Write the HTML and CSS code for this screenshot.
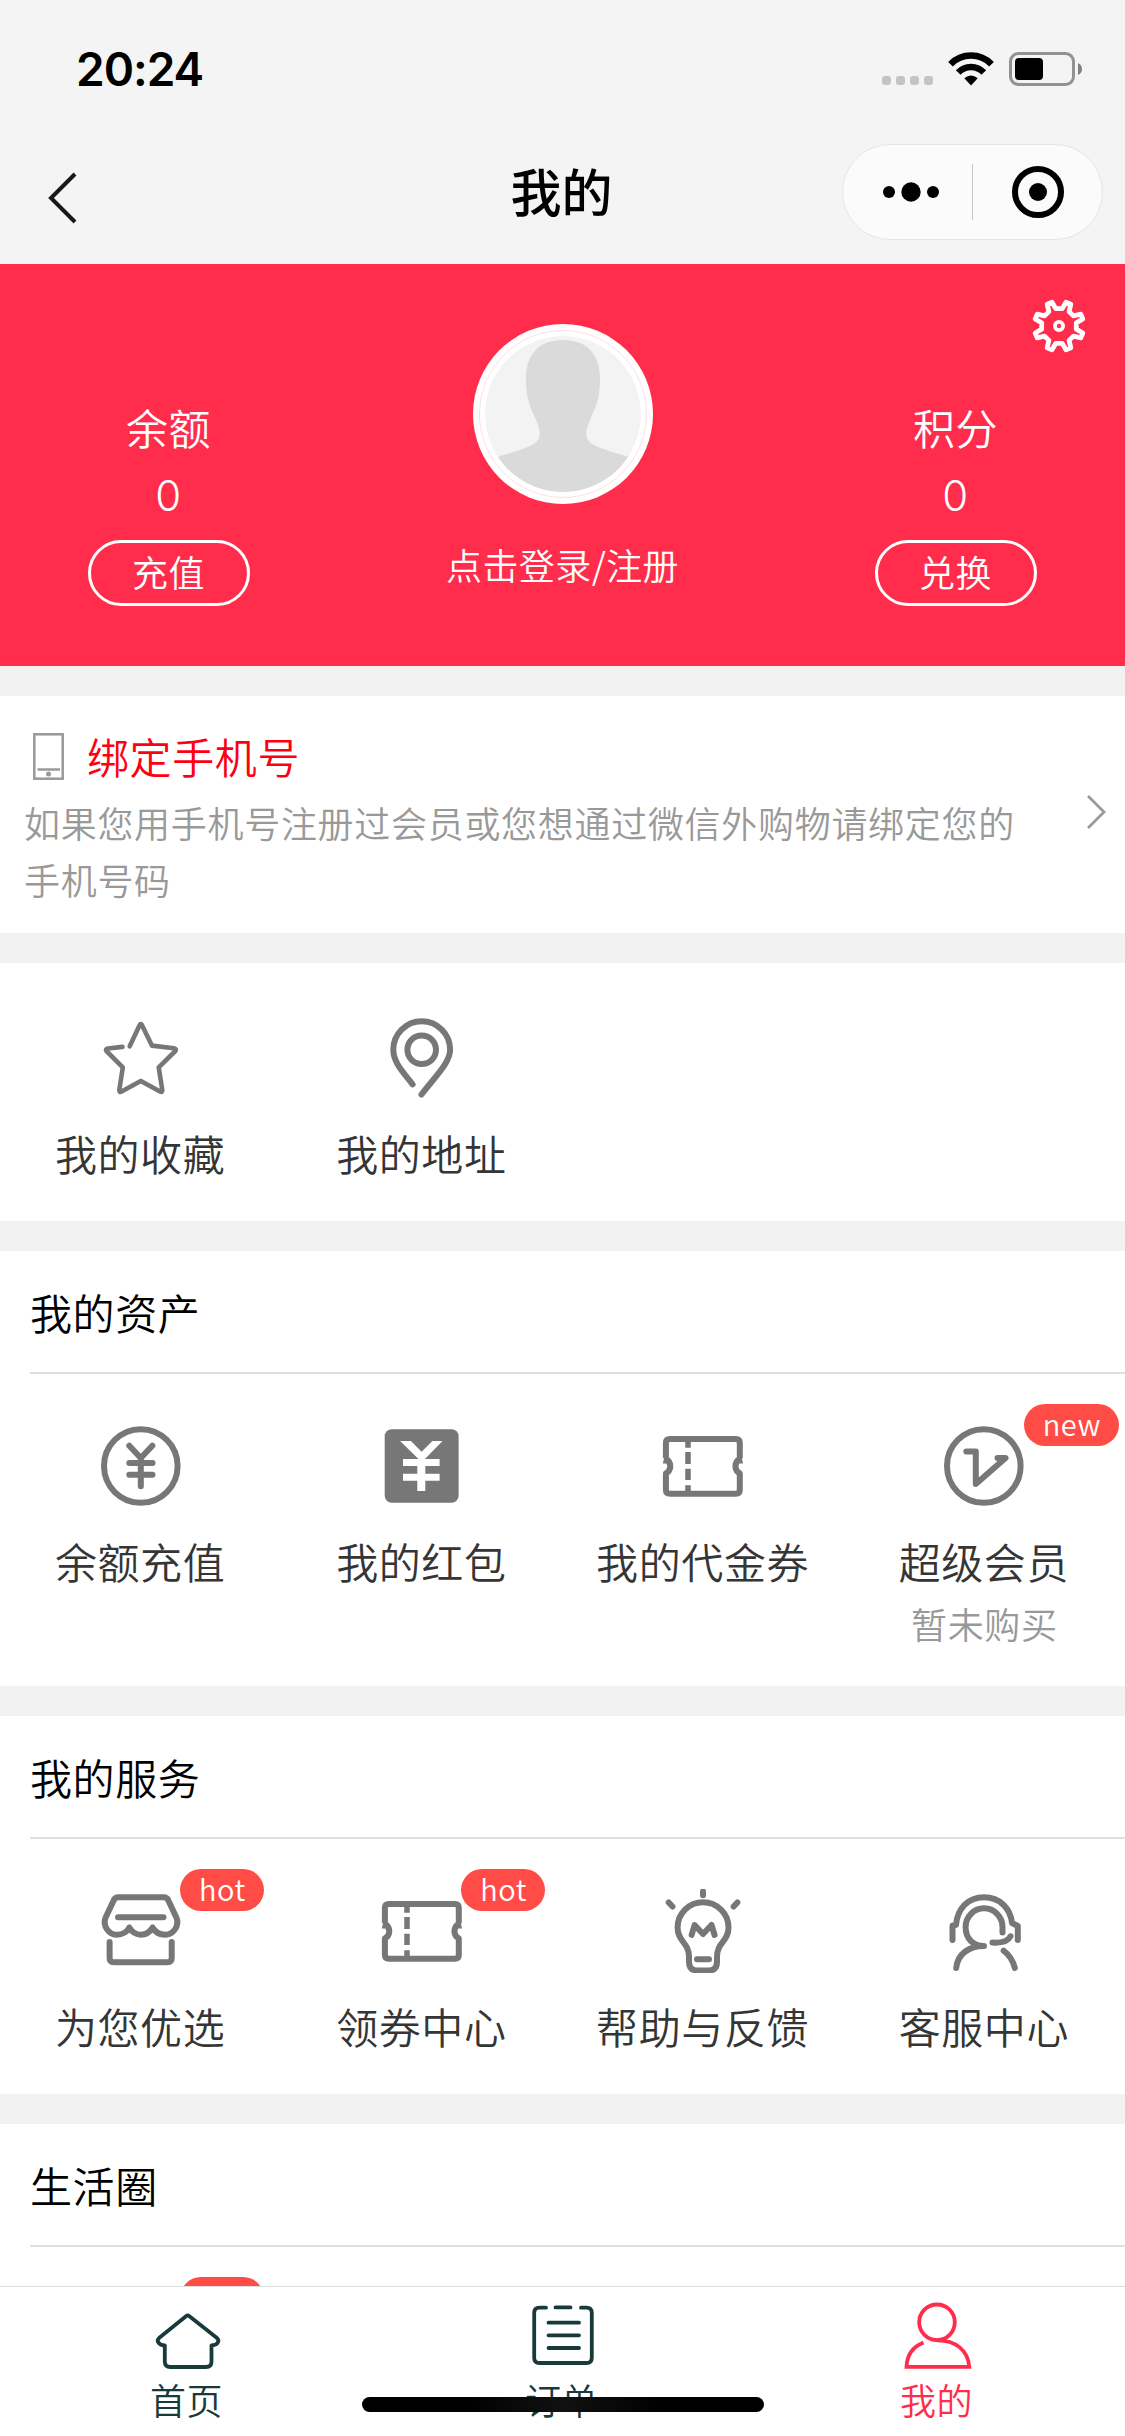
FILE: index.html
```html
<!DOCTYPE html>
<html lang="zh-CN">
<head>
<meta charset="utf-8">
<title>我的</title>
<link rel="stylesheet" href="styles.css">
</head>
<body>
<svg class="defs" width="0" height="0">
  <symbol id="ticket" viewBox="0 0 84 84">
    <path stroke-linecap="butt" d="M2.5 36.5Q4.9 37 4.9 35V19q0-4 4-4H74.8q4 0 4 4V35Q78.8 37 81.4 36.5M4.9 35A8.2 8.2 0 0 1 4.9 49.5V65.700q0 4 4 4H74.800q4 0 4-4V49.500A8.200 8.200 0 0 1 78.800 35"/>
    <path stroke-linecap="butt" stroke-width="5.500" d="M27 18V23.700M27 28V40M27 44.700V56M27 61.300V67"/>
  </symbol>
</svg>
<div class="page">
  <header>
    <div class="status">
      <span class="time">20:24</span>
      <div class="signs">
        <div class="signal"><i></i><i></i><i></i><i></i></div>
        <svg class="wifi" width="46" height="34" viewBox="0 0 46 34"><g fill="none" stroke="#000" stroke-width="6.500"><path d="M2.500 12.200A28.700 28.700 0 0 1 43.500 12.200"/><path d="M10.200 20.500A17.500 17.500 0 0 1 35.800 20.500"/></g><path d="M23 33.500L16.300 26.300Q23 20.500 29.700 26.300Z"/></svg>
        <svg width="74" height="34" viewBox="0 0 74 34"><rect x="1.500" y="1.500" width="63" height="31" rx="8" fill="none" stroke="#929292" stroke-width="3"/><rect x="6" y="6" width="28" height="22" rx="4"/><path d="M69 11Q73 13 73 17T69 23Z" fill="#808080"/></svg>
      </div>
    </div>
    <div class="nav">
      <svg class="back" width="32" height="56" viewBox="0 0 32 56"><path d="M28 4L4 28L28 52" fill="none" stroke="#191919" stroke-width="4"/></svg>
      <h1>我的</h1>
      <div class="capsule">
        <svg width="50" height="20" viewBox="0 0 50 20"><circle cx="6" cy="10" r="6"/><circle cx="28" cy="10" r="9.700"/><circle cx="50" cy="10" r="6"/></svg>
        <span class="bar"></span>
        <svg width="52" height="52" viewBox="0 0 52 52"><circle cx="26" cy="26" r="23" fill="none" stroke="#000" stroke-width="6"/><circle cx="26" cy="26" r="9"/></svg>
      </div>
    </div>
  </header>

  <main>
    <section class="hero">
      <div class="side"><span>余额</span><span class="num">0</span><a class="pill">充值</a></div>
      <div class="user">
        <svg width="180" height="180" viewBox="0 0 180 180">
          <defs><clipPath id="face"><circle cx="90" cy="90" r="78"/></clipPath></defs>
          <circle cx="90" cy="90" r="90" fill="#fff"/>
          <circle cx="90" cy="90" r="83.500" fill="none" stroke="#ffdfe4" stroke-width="1"/>
          <g clip-path="url(#face)"><circle cx="90" cy="90" r="78" fill="#f3f3f3"/>
          <path fill="#dadada" d="M90 16C66 16 53 30 53 55C53 76 58 84 63 96C67 105 68 111 65 116C61 123 42 127 22 134V170H158V134C138 127 119 123 115 116C112 111 113 105 117 96C122 84 127 76 127 55C127 30 114 16 90 16Z"/></g>
        </svg>
        <span>点击登录/注册</span>
      </div>
      <div class="side"><span>积分</span><span class="num">0</span><a class="pill">兑换</a></div>
      <svg class="gear" width="56" height="56" viewBox="-28 -28 56 56"><g fill="none" stroke="#fff" stroke-linejoin="round"><path stroke-width="4.800" d="M-3.100-17.300H3.100L7-23.800L11.800-21.800L10.100-14.400L14.400-10.100L21.800-11.800L23.800-7L17.300-3.100V3.100L23.800 7L21.800 11.800L14.400 10.100L10.100 14.400L11.800 21.800L7 23.800L3.100 17.300H-3.100L-7 23.800L-11.800 21.800L-10.100 14.400L-14.400 10.100L-21.800 11.800L-23.800 7L-17.300 3.100V-3.100L-23.800-7L-21.800-11.800L-14.400-10.100L-10.100-14.400L-11.800-21.800L-7-23.800Z"/><circle r="4.100" stroke-width="3.800"/></g></svg>
    </section>

    <section class="bind">
      <div class="bind-text">
        <h2><svg width="31" height="47" viewBox="0 0 31 47"><g fill="none" stroke="#999" stroke-width="2.500"><rect x="1.300" y="1.300" width="28.400" height="44.400"/><path d="M4.500 36.500H27"/></g><circle cx="15.500" cy="41" r="2.500" fill="#999"/></svg>绑定手机号</h2>
        <p>如果您用手机号注册过会员或您想通过微信外购物请绑定您的手机号码</p>
      </div>
      <svg class="chevron" width="20" height="36" viewBox="0 0 20 36"><path d="M2 2L18 18L2 34" fill="none" stroke="#999" stroke-width="2.800"/></svg>
    </section>

    <section class="card">
      <div class="grid">
        <a class="item"><svg class="icon" viewBox="0 0 84 84"><path stroke-width="4.600" d="M30.700 30.300L40.600 9.200Q41.800 7 43 9.200L52.900 29.600L75 32.200Q78 33 76.400 35L59.700 51.300L63.300 74Q63.400 77 61 75.600L41.800 64.900L22.600 75.600Q20.200 77 20.300 74L23.800 51.300L7.400 35Q6 33 8.800 32.500L23.500 30.900"/></svg><span>我的收藏</span></a>
        <a class="item"><svg class="icon" viewBox="0 0 84 84"><path d="M32.600 68.400C24 57 13.300 47 13.300 33.600a28.400 28.400 0 0 1 56.800 0C70.100 47 55.500 60 41.500 78.500"/><circle cx="41.700" cy="33.700" r="14.300"/></svg><span>我的地址</span></a>
      </div>
    </section>

    <section class="card">
      <h2>我的资产</h2>
      <div class="grid">
        <a class="item"><svg class="icon" viewBox="0 0 84 84"><circle cx="41.800" cy="42" r="36.800"/><path d="M30.300 21.700L41.800 34L53.300 21.700M41.800 34V62.300M30.300 39H53.500M30.300 50.700H53.500"/></svg><span>余额充值</span></a>
        <a class="item"><svg class="icon" viewBox="0 0 84 84"><rect x="4.700" y="5.300" width="73.900" height="73.400" rx="7" fill="#777" stroke="none"/><path fill="#fff" stroke="none" d="M20.100 17H30.900L41.600 27.700L52.400 17H62.600L44.900 35H59.600V42H45.300V49.700H59.600V56.700H45.300V67H37.300V56.700H23V49.700H37.300V42H23V35H38.500Z"/></svg><span>我的红包</span></a>
        <a class="item"><svg class="icon"><use href="#ticket"/></svg><span>我的代金券</span></a>
        <a class="item"><b class="badge">new</b><svg class="icon" viewBox="0 0 84 84"><circle cx="41.800" cy="42" r="36.800"/><path stroke-linejoin="round" d="M24.300 27.600H33.800V60L63.500 34H55.500"/></svg><span>超级会员</span><small>暂未购买</small></a>
      </div>
    </section>

    <section class="card">
      <h2>我的服务</h2>
      <div class="grid">
        <a class="item"><b class="badge">hot</b><svg class="icon" viewBox="0 0 84 84"><path d="M19.500 8.300H64.500q3.800 0 5 3.500L77.600 29C80.500 37 74 45.700 66.500 45.700C60 45.700 56 43 53.600 38.500C51 43 47 45.700 41.900 45.700C37 45.700 33 43 30.300 38.500C28 43 24 45.700 17.500 45.700C10 45.700 3.500 37 6.400 29L14.500 11.800q1.200-3.500 5-3.500ZM19 28.300H64.500M10.600 53V69q0 4.300 4.300 4.300H68.400q4.300 0 4.300-4.300V53"/></svg><span>为您优选</span></a>
        <a class="item"><b class="badge">hot</b><svg class="icon"><use href="#ticket"/></svg><span>领券中心</span></a>
        <a class="item"><svg class="icon" viewBox="0 0 84 84"><path d="M42 13.300C56 13.300 67.500 24.500 67.500 38.500C67.500 53 56 53 56 68V73q0 8.500-8.500 8.500H36.500Q28 81.500 28 73V68C28 53 16.600 53 16.600 38.500C16.600 24.500 28 13.300 42 13.300ZM42 2.500V6.200M7.700 13.500L11.500 17.500M76.400 13.500L72.600 17.500M30.600 46L33.600 36L42 45L50.500 36L53.600 46M36 70.300H48"/></svg><span>帮助与反馈</span></a>
        <a class="item"><svg class="icon" viewBox="0 0 84 84"><path d="M10.500 51V36.500L14 36C15.500 19.500 26 8.300 42 8.300C58 8.300 68.500 19.500 70 34L75.800 37V51M60.500 43.500V38A18.400 18.600 0 0 0 23.600 38C23.600 49.500 31 57 42 57C27 57 15.500 65 14.200 79M50.500 53.600Q65 54.500 68.500 47.300M61.600 61.700Q70 68 72.800 79"/></svg><span>客服中心</span></a>
      </div>
    </section>

    <section class="card">
      <h2>生活圈</h2>
      <div class="grid"><a class="item"><b class="badge">hot</b></a></div>
    </section>
  </main>

  <nav class="tabs">
    <a class="tab"><svg class="tab-icon" viewBox="0 0 72 72"><path d="M34 16.200Q35.700 14.700 37.400 16.200L65 38Q67.500 40.500 65.500 43Q64 45.300 59.500 45.300V61.500q0 5.500-5.500 5.500H18.300q-5.500 0-5.500-5.500V45.300Q8.500 45.300 6.800 43Q4.500 40.500 7 38Z"/></svg><span>首页</span></a>
    <a class="tab"><svg class="tab-icon" viewBox="0 0 72 72"><path d="M19 7.700H12.500Q7.200 7.700 7.200 13V57.700Q7.200 63 12.500 63H59.500Q64.800 63 64.800 57.700V13Q64.800 7.700 59.500 7.700H54M28.500 7.400H43.500M21.500 22.700H52M21.500 35.300H52M21.500 48H52"/></svg><span>订单</span></a>
    <a class="tab active"><svg class="tab-icon" viewBox="0 0 72 72"><circle cx="35" cy="22.300" r="17.800"/><path stroke-linejoin="miter" stroke-linecap="butt" d="M35 40.300C53 40 66 50 67.300 66.800H4.500C5 55 11.500 46.500 21.500 42.500"/></svg><span>我的</span></a>
  </nav>
  <div class="home-bar"></div>
</div>
</body>
</html>
```
FILE: styles.css
```css
* { box-sizing: border-box; }
body {
  margin: 0;
  font-family: "Noto Sans CJK SC", sans-serif;
  font-size: 42px;
  font-weight: 350;
  letter-spacing: 0.6px;
  color: #353535;
}
h1, h2, p { margin: 0; font-size: inherit; font-weight: inherit; }
svg { display: block; flex: none; }
.defs { position: absolute; }
.page {
  position: relative;
  display: flex;
  flex-direction: column;
  width: 1125px;
  height: 2436px;
  overflow: hidden;
  background: #f2f2f2;
}

/* status bar and navigation */
header { height: 264px; flex: none; background: #f4f4f4; color: #000; }
.status {
  display: flex;
  justify-content: space-between;
  height: 138px;
  padding: 0 42px 0 76px;
  align-items: center;
}
.time { font: 600 46px/60px Inter, sans-serif; letter-spacing: -1px; }
.signs { display: flex; align-items: flex-end; }
.signal { display: flex; gap: 5px; margin: 0 15px 1px 0; }
.signal i { width: 9px; height: 9px; border-radius: 3px; background: #c4c4c4; }
.wifi { margin-right: 15px; }
.nav {
  display: grid;
  grid-template-columns: 1fr auto 1fr;
  align-items: center;
  padding: 6px 22px 0 47px;
  height: 102px;
}
.nav h1 {
  margin: 0 0 4px -27px;
  font-size: 51px;
  line-height: 86px;
  font-weight: 500;
  letter-spacing: 0;
}
.back { margin-top: 12px; }
.capsule {
  justify-self: end;
  display: flex;
  align-items: center;
  width: 261px;
  height: 96px;
  padding-left: 40px;
  border: 1px solid #e5e5e5;
  border-radius: 48px;
  background: #fbfbfb;
}
.capsule svg { overflow: visible; }
.bar { width: 1px; height: 56px; margin: 0 39px; background: #c8c8c8; }

main { flex: 1; min-height: 0; overflow: hidden; }

/* member banner */
.hero {
  position: relative;
  display: grid;
  grid-template-columns: 338px 1fr 338px;
  height: 402px;
  background: #ff2d4b;
  color: #fff;
}
.side {
  display: flex;
  flex-direction: column;
  align-items: center;
  padding-top: 130px;
  line-height: 66px;
}
.side span { margin-right: 1px; }
.side .num {
  margin-bottom: -6px;
  font-family: Inter, sans-serif;
  font-weight: 350;
  line-height: 71px;
}
.pill {
  width: 162px;
  height: 66px;
  margin-top: 15px;
  padding-right: 1px;
  border: 3px solid #fff;
  border-radius: 33px;
  font-size: 36px;
  line-height: 56px;
  text-align: center;
}
.user {
  display: flex;
  flex-direction: column;
  align-items: center;
  gap: 30px;
  padding-top: 60px;
  font-size: 36px;
  line-height: 60px;
  letter-spacing: 0.4px;
}
.gear { position: absolute; left: 1031px; top: 34px; }

/* phone binding */
.bind {
  display: flex;
  align-items: center;
  height: 237px;
  margin: 30px 0;
  padding: 0 19px 0 24px;
  background: #fff;
}
.bind-text { width: 1010px; }
.bind h2 {
  display: flex;
  align-items: center;
  gap: 23px;
  margin-bottom: 3px;
  padding-left: 9px;
  line-height: 70px;
  color: #ff0010;
}
.bind p {
  font-size: 36px;
  line-height: 57px;
  letter-spacing: 0.7px;
  color: #999;
}
.chevron { margin: 0 0 5px auto; }

/* function groups */
.card { margin-bottom: 30px; background: #fff; }
.card h2 {
  height: 123px;
  margin-left: 30px;
  border-bottom: 2px solid #dfdfdf;
  line-height: 121px;
  color: #000;
}
.grid {
  display: grid;
  grid-template-columns: repeat(4, 1fr);
  padding: 50px 0 38px;
}
.item {
  position: relative;
  display: flex;
  flex-direction: column;
  align-items: center;
  line-height: 60px;
}
.item span { margin-right: 1px; }
.card:nth-of-type(3) .grid { padding-top: 53px; }
.icon {
  width: 84px;
  height: 84px;
  margin-bottom: 23px;
  fill: none;
  stroke: #777;
  stroke-width: 6;
  stroke-linecap: round;
  stroke-linejoin: round;
}
.item small {
  margin-top: 7px;
  font-size: 36px;
  line-height: 50px;
  letter-spacing: 0.65px;
  color: #999;
}
.badge {
  position: absolute;
  left: 180px;
  top: -20px;
  height: 42px;
  padding: 0 18px 0 19px;
  border-radius: 21px;
  background: #ff4c46;
  color: #fff;
  font-size: 29px;
  font-weight: 350;
  line-height: 38px;
  letter-spacing: 0.5px;
}

/* tab bar */
.tabs {
  display: grid;
  grid-template-columns: repeat(3, 1fr);
  flex: none;
  height: 150px;
  border-top: 1px solid #dedede;
  background: #fff;
}
.tab {
  display: flex;
  flex-direction: column;
  align-items: center;
  padding-top: 13px;
  font-size: 36px;
  line-height: 54px;
  color: #183a3b;
}
.tab.active { color: #ff2d4b; }
.tab-icon {
  width: 72px;
  height: 72px;
  fill: none;
  stroke: currentColor;
  stroke-width: 3.8;
  stroke-linecap: round;
  stroke-linejoin: round;
}
.tab span { margin-right: 2px; }
.home-bar {
  position: absolute;
  left: 362px;
  top: 2397px;
  width: 402px;
  height: 15px;
  border-radius: 8px;
  background: linear-gradient(90deg, #000 25%, #111 50%, #000 75%);
}
```
